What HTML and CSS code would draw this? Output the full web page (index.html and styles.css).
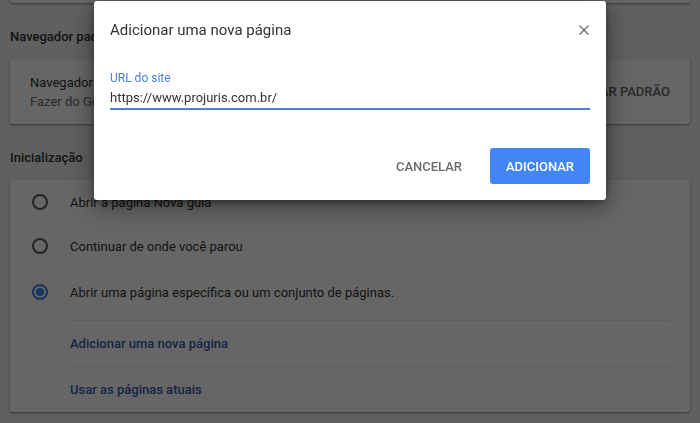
FILE: index.html
```html
<!DOCTYPE html>
<html lang="pt-BR">
<head>
<meta charset="utf-8">
<title>Configurações</title>
<link rel="stylesheet" href="styles.css">
</head>
<body>
<main class="page">
  <section class="card top-card"></section>

  <h2 class="section-title">Navegador padrão</h2>
  <section class="card default-card">
    <div class="default-text">
      <div class="primary">Navegador padrão</div>
      <div class="secondary">Fazer do Google Chrome o navegador padrão</div>
    </div>
    <button class="flat-btn">TORNAR PADRÃO</button>
  </section>

  <h2 class="section-title">Inicialização</h2>
  <section class="card startup-card">
    <div class="radio-row"><span class="radio"></span><span>Abrir a página Nova guia</span></div>
    <div class="radio-row"><span class="radio"></span><span>Continuar de onde você parou</span></div>
    <div class="radio-row tall"><span class="radio checked"></span><span>Abrir uma página específica ou um conjunto de páginas.</span></div>
    <div class="sublist">
      <div class="link-row">Adicionar uma nova página</div>
      <div class="link-row">Usar as páginas atuais</div>
    </div>
  </section>
</main>

<div class="overlay"></div>

<div class="dialog">
  <div class="dialog-head">
    <span class="dialog-title">Adicionar uma nova página</span>
    <svg class="close" width="10" height="10" viewBox="0 0 10 10"><path d="M0.5 0.5 L9.5 9.5 M9.5 0.5 L0.5 9.5" stroke="#666" stroke-width="1.2" fill="none"/></svg>
  </div>
  <div class="dialog-body">
    <label class="field-label">URL do site</label>
    <div class="field-input">https://www.projuris.com.br/</div>
  </div>
  <div class="dialog-foot">
    <button class="btn cancel">CANCELAR</button>
    <button class="btn primary-btn">ADICIONAR</button>
  </div>
</div>
</body>
</html>
```
FILE: styles.css
```css
* { box-sizing: border-box; }
html, body { margin: 0; height: 100%; }
body {
  background: #f1f1f1;
  font-family: Roboto, "Noto Sans", sans-serif;
  font-size: 13px;
  color: #333;
  overflow: hidden;
}
.page { padding: 0 10px; }
.card {
  background: #fff;
  border-radius: 2px;
  box-shadow: 0 1px 2px rgba(0,0,0,0.3), 0 1px 3px rgba(0,0,0,0.15);
}
.top-card { height: 40px; margin-top: -37px; }
.section-title {
  margin: 0;
  font-size: 13px;
  font-weight: 500;
  line-height: 20px;
  padding: 24px 0 12px;
  color: #333;
}
.default-card {
  height: 65px;
  display: flex;
  align-items: center;
  justify-content: space-between;
  padding: 0 12px 0 20px;
}
.default-text { line-height: 19px; white-space: nowrap; }
.secondary { color: #6d6d6d; }
.flat-btn {
  flex: none;
  white-space: nowrap;
  border: 0;
  background: none;
  font: 500 13px Roboto, sans-serif;
  color: #666;
  padding: 0 8px;
}
.radio-row {
  height: 44px;
  display: flex;
  align-items: center;
  padding-left: 22px;
  gap: 22px;
}
.radio-row.tall { height: 48px; }
.radio {
  width: 16px; height: 16px;
  border: 2px solid #5a5a5a;
  border-radius: 50%;
  display: flex;
  align-items: center;
  justify-content: center;
  flex: none;
}
.radio.checked { border-color: #4285f4; }
.radio.checked::after {
  content: "";
  width: 8px; height: 8px;
  border-radius: 50%;
  background: #4285f4;
}
.sublist { margin: 4px 20px 0 60px; }
.link-row {
  height: 46px;
  display: flex;
  align-items: center;
  border-top: 1px solid #e8e8e8;
  color: #3a5bb0;
  font-weight: 500;
}
.overlay {
  position: fixed;
  inset: 0;
  background: rgba(0,0,0,0.6);
}
.dialog {
  position: absolute;
  left: 94px;
  top: 1px;
  width: 512px;
  height: 199px;
  background: #fff;
  border-radius: 3px;
  box-shadow: 0 6px 24px rgba(0,0,0,0.45), 0 2px 6px rgba(0,0,0,0.3);
  display: flex;
  flex-direction: column;
}
.dialog-head {
  display: flex;
  align-items: center;
  justify-content: space-between;
  padding: 13px 17px 0 16px;
  height: 44px;
}
.dialog-title { font-size: 15px; color: #333; }
.dialog-body { padding: 26px 16px 0; display: flex; flex-direction: column; }
.field-label { font-size: 12px; color: #4a7fd8; line-height: 14px; }
.field-input {
  font-size: 13px;
  color: #333;
  line-height: 20px;
  padding: 3px 0 0;
  border-bottom: 2px solid #4f83d1;
}
.dialog-foot {
  margin-top: auto;
  display: flex;
  justify-content: flex-end;
  gap: 12px;
  padding: 0 16px 16px;
}
.btn {
  height: 36px;
  border: 0;
  border-radius: 3px;
  font: 500 13px Roboto, sans-serif;
  padding: 0 16px;
  background: none;
}
.cancel { color: #6a6a6a; }
.primary-btn { background: #4285f4; color: #fff; width: 100px; }
```
